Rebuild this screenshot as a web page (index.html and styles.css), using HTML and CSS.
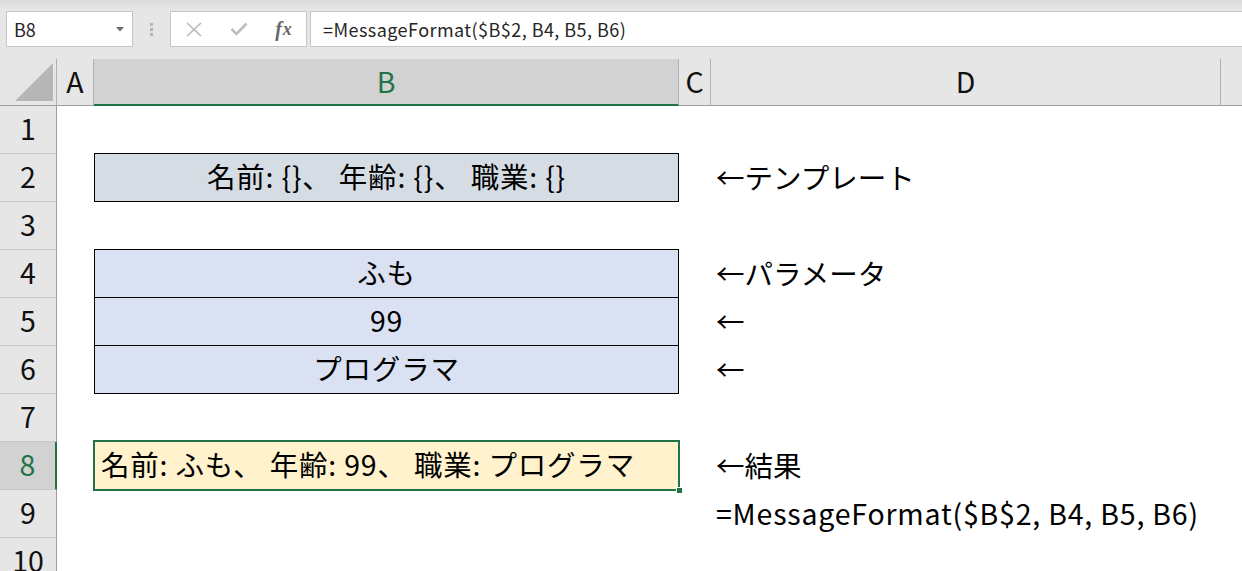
FILE: index.html
```html
<!DOCTYPE html>
<html lang="ja">
<head>
<meta charset="utf-8">
<title>MessageFormat</title>
<link rel="stylesheet" href="styles.css">
</head>
<body>
<div class="toolbar">
  <div class="namebox">
    <span>B8</span>
    <svg class="dd" width="8" height="5" viewBox="0 0 8 5"><polygon points="0,0 8,0 4,4.5" fill="#6b6b6b"/></svg>
  </div>
  <div class="grip"><i></i><i></i><i></i></div>
  <div class="fxgroup">
    <span class="btn"><svg width="16" height="15" viewBox="0 0 16 15"><path d="M1 1 L15 14 M15 1 L1 14" stroke="#b8b8b8" stroke-width="1.6" fill="none"/></svg></span>
    <span class="btn"><svg width="18" height="14" viewBox="0 0 18 14"><path d="M1.5 7 L6.5 12 L16.5 1.5" stroke="#bdbdbd" stroke-width="2.6" fill="none"/></svg></span>
    <span class="btn fx"><i>f</i><i class="x">x</i></span>
  </div>
  <div class="formula">=MessageFormat($B$2, B4, B5, B6)</div>
</div>

<div class="sheet">
  <div class="hd corner"><div class="lab"><svg width="56" height="46" viewBox="0 0 56 46"><polygon points="15,42 53,42 53,4" fill="#b6b6b6"/></svg></div></div>
  <div class="hd"><div class="lab">A</div></div>
  <div class="hd"><div class="lab sel">B</div></div>
  <div class="hd"><div class="lab">C</div></div>
  <div class="hd"><div class="lab">D</div></div>
  <div class="hd"><div class="lab last"></div></div>

  <div class="rh">1</div><div class="c"></div><div class="c"></div><div class="c"></div><div class="c"></div><div class="c"></div>

  <div class="rh">2</div><div class="c"></div><div class="c box tpl">名前: {}、 年齢: {}、 職業: {}</div><div class="c"></div><div class="c note">←テンプレート</div><div class="c"></div>

  <div class="rh">3</div><div class="c"></div><div class="c"></div><div class="c"></div><div class="c"></div><div class="c"></div>

  <div class="rh">4</div><div class="c"></div><div class="c box prm">ふも</div><div class="c"></div><div class="c note">←パラメータ</div><div class="c"></div>

  <div class="rh">5</div><div class="c"></div><div class="c box prm">99</div><div class="c"></div><div class="c note">←</div><div class="c"></div>

  <div class="rh">6</div><div class="c"></div><div class="c box prm">プログラマ</div><div class="c"></div><div class="c note">←</div><div class="c"></div>

  <div class="rh">7</div><div class="c"></div><div class="c"></div><div class="c"></div><div class="c"></div><div class="c"></div>

  <div class="rh sel">8</div><div class="c"></div><div class="c res">名前: ふも、 年齢: 99、 職業: プログラマ<span class="handle"></span></div><div class="c"></div><div class="c note">←結果</div><div class="c"></div>

  <div class="rh">9</div><div class="c"></div><div class="c"></div><div class="c"></div><div class="c note latin">=MessageFormat($B$2, B4, B5, B6)</div><div class="c"></div>

  <div class="rh">10</div><div class="c"></div><div class="c"></div><div class="c"></div><div class="c"></div><div class="c"></div>
</div>
</body>
</html>
```

FILE: styles.css
```css
html, body {
  margin: 0;
  padding: 0;
  background: #ffffff;
  overflow: hidden;
}

body {
  font-family: "Noto Sans CJK JP", "Noto Sans", sans-serif;
  color: #000;
}

/* ---------- formula toolbar ---------- */
.toolbar {
  height: 47px;
  box-sizing: border-box;
  padding: 11px 0 0 6px;
  display: flex;
  align-items: flex-start;
  background: linear-gradient(#d9d9d9 0px, #e6e6e6 9px, #e6e6e6 100%);
}

.namebox {
  width: 127px;
  height: 36px;
  box-sizing: border-box;
  border: 1px solid #c6c6c6;
  background: #fff;
  display: flex;
  align-items: center;
  justify-content: space-between;
  padding: 0 8px 0 7px;
  font-size: 18px;
  color: #262626;
}

.namebox .dd {
  margin-top: 1px;
}

.grip {
  width: 37px;
  display: flex;
  flex-direction: column;
  align-items: center;
  gap: 2px;
  padding-top: 12px;
}

.grip i {
  display: block;
  width: 3px;
  height: 3px;
  background: #b4b4b4;
}

.fxgroup {
  width: 137px;
  height: 36px;
  box-sizing: border-box;
  border: 1px solid #c6c6c6;
  background: #fff;
  display: flex;
  align-items: center;
  margin-right: 3px;
}

.btn {
  width: 45px;
  display: flex;
  align-items: center;
  justify-content: center;
}

.fx {
  font-family: "Liberation Serif", serif;
  font-style: italic;
  font-size: 20px;
  color: #666;
  font-weight: bold;
}

.fx i {
  font-style: italic;
}

.fx .x {
  font-size: 18px;
  margin-left: 1px;
}

.formula {
  flex: 1;
  height: 36px;
  box-sizing: border-box;
  border: 1px solid #c6c6c6;
  border-right: none;
  background: #fff;
  display: flex;
  align-items: center;
  padding-left: 12px;
  font-size: 18px;
  letter-spacing: 0.45px;
  color: #262626;
  white-space: nowrap;
}

/* ---------- sheet ---------- */
.sheet {
  display: grid;
  grid-template-columns: 57px 37px 585px 32px 510px 1fr;
  grid-template-rows: 59px repeat(10, 48px);
  font-size: 28.5px;
}

.hd {
  background: #e6e6e6;
  padding-top: 12px;
  box-sizing: border-box;
  display: flex;
}

.hd .lab {
  flex: 1;
  border-right: 1px solid #b1b1b1;
  border-bottom: 1px solid #9e9e9e;
  display: flex;
  align-items: center;
  justify-content: center;
  padding-bottom: 3px;
  color: #111;
}

.hd .lab.sel {
  background: #d2d2d2;
  border-bottom: 2px solid #217346;
  color: #217346;
}

.hd .lab.last {
  border-right: none;
}

.corner .lab {
  border-right: 1px solid #b1b1b1;
  align-items: stretch;
  justify-content: flex-start;
  padding-bottom: 0;
}

.rh {
  background: #e6e6e6;
  border-right: 1px solid #9e9e9e;
  border-bottom: 1px solid #c8c8c8;
  box-sizing: border-box;
  display: flex;
  align-items: center;
  justify-content: center;
  padding-bottom: 4px;
  color: #111;
}

.rh.sel {
  background: #d2d2d2;
  border-right: 2px solid #217346;
  color: #217346;
}

.c {
  box-sizing: border-box;
  display: flex;
  align-items: center;
  white-space: nowrap;
  min-width: 0;
  padding-bottom: 4px;
}

.box {
  border: 1px solid #000;
  margin-top: -1px;
  justify-content: center;
  letter-spacing: 0.8px;
}

.tpl {
  background: #d6dce4;
}

.prm {
  background: #d9e1f2;
}

.res {
  background: #fff2cc;
  border: 2px solid #217346;
  margin: -2px -1px -1px -1px;
  padding-left: 6px;
  letter-spacing: 0.8px;
  position: relative;
}

.handle {
  position: absolute;
  right: -5px;
  bottom: -5px;
  width: 5px;
  height: 5px;
  background: #217346;
  border: 1px solid #fff;
}

.note {
  padding-left: 5px;
}

.note.latin {
  letter-spacing: 0.8px;
}
```
